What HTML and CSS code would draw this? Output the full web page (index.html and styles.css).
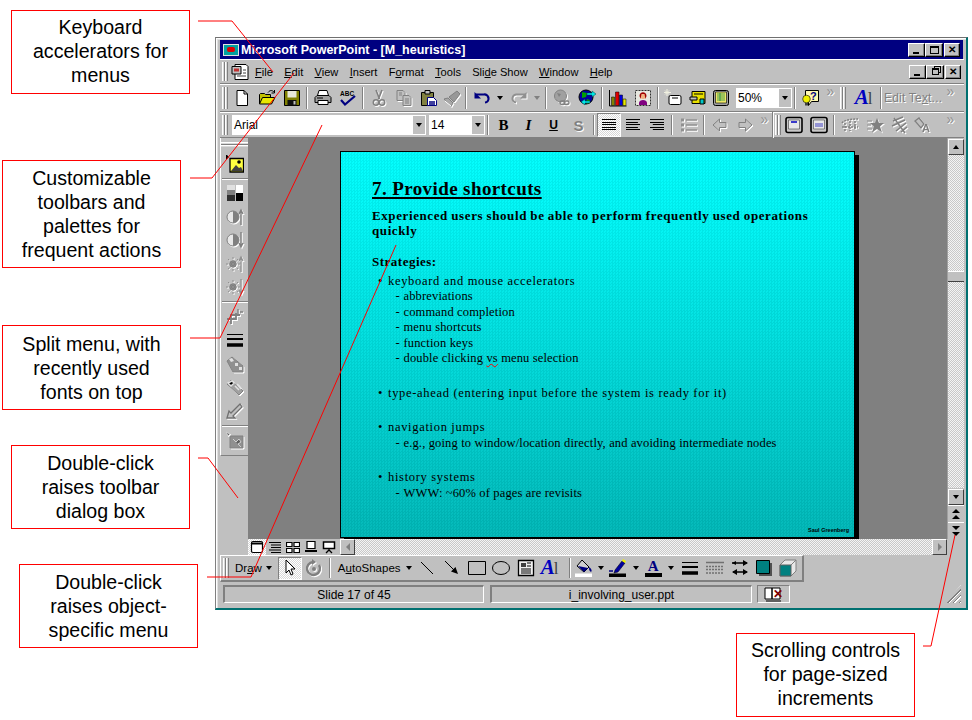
FILE: index.html
```html
<!DOCTYPE html>
<html lang="en">
<head>
    <meta charset="UTF-8">
    <title>Provide shortcuts</title>
    <link rel="stylesheet" href="styles.css">
</head>
<body>
<svg class="defs" width="0" height="0">
    <symbol id="new" viewBox="0 0 18 18"><path d="M4 1.500h7l3.500 3.500v11.500H4z" fill="#fff" stroke="#000"/><path d="M11 1.500V5h3.500" fill="none" stroke="#000"/></symbol>
    <symbol id="open" viewBox="0 0 18 18"><path d="M1.500 15V5.500l1-1h4l1 1h5v3" fill="#c0c000" stroke="#000"/><path d="M1.500 15l3-6.500H17L13.500 15z" fill="#e8e800" stroke="#000"/><path d="M10 3.500c2-2.500 4-2.500 6-.5M16.500 1v3h-3" fill="none" stroke="#000"/></symbol>
    <symbol id="save" viewBox="0 0 18 18"><path d="M1.500 1.500h15v15h-15z" fill="#808000" stroke="#000"/><path d="M4.500 2h9v6.500h-9z" fill="#e8e8d8"/><path d="M4.500 11h9v5.500h-9z" fill="#111"/><path d="M10.500 12h2v3.500h-2z" fill="#c0c0c0"/></symbol>
    <symbol id="print" viewBox="0 0 18 18"><path d="M5 1.500h8l1.500 5h-11z" fill="#fff" stroke="#000"/><path d="M1 8.500l2-2h12l2 2v5H1z" fill="#a0a0a0" stroke="#000"/><path d="M4 11.500h10v4H4z" fill="#fff" stroke="#000"/><path d="M3 9h6" stroke="#000"/></symbol>
    <symbol id="cut" viewBox="0 0 18 18"><path d="M6 1l3.500 9M12 1L8.500 10" stroke="#808080" stroke-width="1.600" fill="none"/><circle cx="6" cy="13.500" r="2.700" fill="none" stroke="#808080" stroke-width="1.500"/><circle cx="12" cy="13.500" r="2.700" fill="none" stroke="#808080" stroke-width="1.500"/></symbol>
    <symbol id="copy" viewBox="0 0 18 18"><path d="M2 1.500h6l2 2v8H2z" fill="#c0c0c0" stroke="#808080"/><path d="M8 6.500h6l2 2v8H8z" fill="#c0c0c0" stroke="#808080"/><path d="M10 10h4M10 12h4M10 14h4M4 4h3M4 6h3" stroke="#808080"/></symbol>
    <symbol id="paste" viewBox="0 0 18 18"><path d="M1.500 3.500h12v13h-12z" fill="#808040" stroke="#000"/><path d="M5 1.500h5v3.500H5z" fill="#c0c0c0" stroke="#000"/><path d="M7.500 8.500h6l3 3v5h-9z" fill="#fff" stroke="#000080"/><path d="M9 13h6M9 15h6" stroke="#000080" stroke-width="1.300"/></symbol>
    <symbol id="brush" viewBox="0 0 18 18"><path d="M1 10l4-1 5 5-2 3.500z" fill="#a8a8a8" stroke="#808080"/><path d="M6 8l8-6 3 3-6 8z" fill="#989898" stroke="#808080"/><path d="M2 12l6 5" stroke="#fff"/></symbol>
    <symbol id="undo" viewBox="0 0 18 18"><path d="M3 5.500h8a4 4 0 0 1 1 8" fill="none" stroke="#000080" stroke-width="2.200"/><path d="M1.500 3v6.500H8z" fill="#000080"/></symbol>
    <symbol id="redo" viewBox="0 0 18 18"><path d="M15 5.500H7a4 4 0 0 0-1 8" fill="none" stroke="#909090" stroke-width="2"/><path d="M16.500 3v6.500H10z" fill="#909090"/></symbol>
    <symbol id="globe-off" viewBox="0 0 18 18"><circle cx="7.500" cy="7" r="6" fill="#a0a0a0" stroke="#808080"/><path d="M4 4l4 1-2 3z" fill="#808080"/><rect x="7" y="12" width="5" height="3.500" rx="1.700" fill="none" stroke="#808080" stroke-width="1.400"/><rect x="11" y="12" width="5" height="3.500" rx="1.700" fill="none" stroke="#808080" stroke-width="1.400"/></symbol>
    <symbol id="globe" viewBox="0 0 18 18"><circle cx="8" cy="8" r="7" fill="#0000a0" stroke="#000"/><path d="M4 3l5 1-1 4-4 1zM9 10l3 1-2 4-2-1z" fill="#00a000"/><path d="M9 4h5V2l4 3-4 3V6H9zM12 12H7v-2l-4 3 4 3v-2h5z" fill="#00e8e8" stroke="#004040" stroke-width=".5"/></symbol>
    <symbol id="chart" viewBox="0 0 18 18"><path d="M.5 1v16h17" fill="none" stroke="#000"/><path d="M2.500 8h3v8.500h-3z" fill="#808000" stroke="#000" stroke-width=".5"/><path d="M6.500 3h3.500v13.500H6.500z" fill="#e00000" stroke="#000" stroke-width=".5"/><path d="M10.500 6h3v10.500h-3z" fill="#0000e0" stroke="#000" stroke-width=".5"/><path d="M14 10h3v6.500h-3z" fill="#e8e800" stroke="#000" stroke-width=".5"/></symbol>
    <symbol id="clip" viewBox="0 0 18 18"><path d="M1.500 1.500h15v15h-15z" fill="#e8e8e0" stroke="#303030" stroke-dasharray="2 1"/><path d="M5 14c0-4 8-4 8 0v2H5z" fill="#800080"/><circle cx="9" cy="7" r="3" fill="#f0b080"/><path d="M5.500 7c0-5 7-5 7 0l-1 3-1-5H7.500l-1 5z" fill="#a00000"/></symbol>
    <symbol id="slide-new" viewBox="0 0 18 18"><rect x="5" y="6.500" width="12" height="9" rx="1.500" fill="#fff" stroke="#000"/><path d="M8 9h6" stroke="#000"/><path d="M3 0v7M0 3.500h7M1 1.500l4 4M5 1.500l-4 4" stroke="#f0f0e0"/></symbol>
    <symbol id="slide-layout" viewBox="0 0 18 18"><path d="M3 2.500h13v12H3z" fill="#e8e000" stroke="#000"/><path d="M5 5h9" stroke="#000"/><path d="M1 8h7v3H1z" fill="#c0c0c0" stroke="#000"/><path d="M11 10h4v5h-4z" fill="#00c8c8" stroke="#000"/></symbol>
    <symbol id="slide-notes" viewBox="0 0 18 18"><rect x="1.500" y="1.500" width="15" height="15" rx="2" fill="#a0a0a0" stroke="#000"/><path d="M3.500 3h11v11h-11z" fill="#f0e868" stroke="#000" stroke-width=".6"/><path d="M5 5h8M5 7h8M5 9h8M5 11h8M8 4v8" stroke="#008040" stroke-width=".7"/></symbol>
    <symbol id="bullets" viewBox="0 0 18 18"><path d="M6 4h11M6 9h11M6 14h11" stroke="#909090" stroke-width="1.500"/><path d="M1 2.500h3v3H1zM1 7.500h3v3H1zM1 12.500h3v3H1z" fill="#909090"/></symbol>
    <symbol id="promote" viewBox="0 0 18 18"><path d="M2 9l6.500-6v3.500H15v5H8.500V15z" fill="#c0c0c0" stroke="#808080"/></symbol>
    <symbol id="demote" viewBox="0 0 18 18"><path d="M16 9L9.500 3v3.500H3v5h6.500V15z" fill="#c0c0c0" stroke="#808080"/></symbol>
    <symbol id="frame-a" viewBox="0 0 18 18"><rect x="1" y="1.500" width="16" height="15" rx="2" fill="#c8c8c8" stroke="#000" stroke-width="1.600"/><path d="M3.500 4h11v9h-11z" fill="#e8e8e8" stroke="#404040" stroke-width=".6"/><path d="M6 6h6" stroke="#0000c0" stroke-width="1.500"/></symbol>
    <symbol id="frame-b" viewBox="0 0 18 18"><rect x="1" y="1.500" width="16" height="15" rx="2" fill="#c8c8c8" stroke="#000" stroke-width="1.600"/><path d="M3.500 4h11v9h-11z" fill="#e8e8e8" stroke="#404040" stroke-width=".6"/><path d="M5 8h8M5 10h8" stroke="#4040c0"/></symbol>
    <symbol id="anim-a" viewBox="0 0 18 18"><path d="M1 7c3-4 13-4 16-4M1 11h16M4 7v8M9 5v10M14 5v8" fill="none" stroke="#808080" stroke-width="1.500" stroke-dasharray="2 1"/></symbol>
    <symbol id="anim-b" viewBox="0 0 18 18"><path d="M1 5h5M1 9h4M1 13h5" stroke="#a0a0a0" stroke-width="1.500"/><path d="M11 2l2 5h5l-4 3.500 2 6-5-3.500-5 3.500 2-6-4-3.500h5z" fill="#808080"/></symbol>
    <symbol id="anim-c" viewBox="0 0 18 18"><path d="M3 5l10-4M2 10L15 4M6 15L16 7M11 16l6-5M4 2l11 15" stroke="#808080" stroke-width="1.500" fill="none"/></symbol>
    <symbol id="insert-pic" viewBox="0 0 18 18"><path d="M4 3.500h13.500v13.500H4z" fill="#ffff40" stroke="#000" stroke-width="1.300"/><circle cx="13" cy="7" r="1.800" fill="#000"/><path d="M5 16l5-6 3 3 2-1 2 4z" fill="#404040"/><path d="M0 0l3 3-3 3z" fill="#000" transform="translate(0 -1)"/></symbol>
    <symbol id="colour-mode" viewBox="0 0 18 18"><path d="M1 1h8v16H1z" fill="#808080"/><path d="M1 1h8v5H1z" fill="#e0e0e0"/><path d="M1 11h8v6H1z" fill="#303030"/><path d="M10 1h7v8h-7z" fill="#fff"/><path d="M10 9h7v8h-7z" fill="#000"/></symbol>
    <symbol id="contrast-up" viewBox="0 0 18 18"><circle cx="7" cy="9" r="6" fill="#e8e8e8" stroke="#808080"/><path d="M7 3a6 6 0 0 1 0 12z" fill="#808080"/><path d="M15 17V3M13 6l2-4 2 4" fill="none" stroke="#808080" stroke-width="1.400"/></symbol>
    <symbol id="contrast-down" viewBox="0 0 18 18"><circle cx="7" cy="9" r="6" fill="#e8e8e8" stroke="#808080"/><path d="M7 3a6 6 0 0 1 0 12z" fill="#808080"/><path d="M15 1v14M13 12l2 4 2-4" fill="none" stroke="#808080" stroke-width="1.400"/></symbol>
    <symbol id="bright-up" viewBox="0 0 18 18"><circle cx="7" cy="9" r="3.500" fill="#808080"/><path d="M7 2v14M0 9h14M2 4l10 10M12 4L2 14" stroke="#909090" stroke-dasharray="2 1"/><path d="M15 17V3M13 6l2-4 2 4" fill="none" stroke="#909090" stroke-width="1.300"/></symbol>
    <symbol id="bright-down" viewBox="0 0 18 18"><circle cx="7" cy="9" r="3.500" fill="#808080"/><path d="M7 2v14M0 9h14M2 4l10 10M12 4L2 14" stroke="#909090" stroke-dasharray="2 1"/><path d="M15 1v14M13 12l2 4 2-4" fill="none" stroke="#909090" stroke-width="1.300"/></symbol>
    <symbol id="crop" viewBox="0 0 18 18"><path d="M1 11h9V5M5 16v-9h9" fill="none" stroke="#808080" stroke-width="1.800"/><path d="M12 1v5M14 4h3" stroke="#808080" stroke-width="1.400"/></symbol>
    <symbol id="line-style" viewBox="0 0 18 18"><path d="M1 3.500h16" stroke="#000"/><path d="M1 8h16" stroke="#000" stroke-width="2"/><path d="M1 14h16" stroke="#000" stroke-width="3.500"/></symbol>
    <symbol id="recolour" viewBox="0 0 18 18"><path d="M1 6l5-4 11 9v6H7z" fill="#909090" stroke="#808080"/><path d="M3 4l3-1 2 3-3 1zM9 8h3v3H9zM13 12h3v3h-3z" fill="#e0e0e0"/></symbol>
    <symbol id="trans" viewBox="0 0 18 18"><path d="M1 6l4-4 12 11-4 4z" fill="#a0a0a0" stroke="#808080"/><path d="M2 5l4-2 2 2-3 3zM9 8l4 4M11 6l4 5" stroke="#e0e0e0" stroke-width="1.500"/></symbol>
    <symbol id="pick" viewBox="0 0 18 18"><path d="M1 16l2-7 2 2 9-9 2 3-9 9 2 2z" fill="#c0c0c0" stroke="#707070" stroke-width="1.300"/></symbol>
    <symbol id="reset-pic" viewBox="0 0 18 18"><path d="M4 5h13v12H4z" fill="#909090" stroke="#808080"/><path d="M7 8l3 3 3-3 2 3-3 2 3 3M0 1l4 2-2 2z" stroke="#d0d0d0" fill="#606060"/></symbol>
    <symbol id="pointer" viewBox="0 0 18 18"><path d="M5 1v13l3-3 2 5 2-1-2-5h4z" fill="#fff" stroke="#000"/></symbol>
    <symbol id="rotate" viewBox="0 0 18 18"><path d="M14 6a6.500 6.500 0 1 1-6-3" fill="none" stroke="#808080" stroke-width="2.400"/><path d="M7 0l4 3-4 3z" fill="#808080"/><circle cx="9" cy="10" r="2" fill="#808080"/></symbol>
    <symbol id="line" viewBox="0 0 18 18"><path d="M3 3l12 12" stroke="#000"/></symbol>
    <symbol id="arrow" viewBox="0 0 18 18"><path d="M2 2l10 10" stroke="#000"/><path d="M15 15l-7-2.500 4.500-4.500z" fill="#000"/></symbol>
    <symbol id="rect" viewBox="0 0 18 18"><path d="M.5 2.500h17v13H.5z" fill="none" stroke="#000"/></symbol>
    <symbol id="oval" viewBox="0 0 18 18"><ellipse cx="9" cy="9" rx="8.500" ry="6.500" fill="none" stroke="#000"/></symbol>
    <symbol id="textbox" viewBox="0 0 18 18"><path d="M1.500 1.500h15v15h-15z" fill="#f0f0f0" stroke="#000" stroke-width="1.300"/><path d="M4 4h5v4H4z" fill="#404040"/><path d="M10 4h4M10 7h4M4 10h10M4 12h10M4 14h10" stroke="#000"/></symbol>
    <symbol id="fill" viewBox="0 0 18 18"><path d="M7 1l7 7-5 5-7-6z" fill="#d0d0d0" stroke="#000"/><path d="M3 7l6 6 4-4z" fill="#000080"/><path d="M14 8c3 2 3 4 2 5-2-1-2-3-2-5z" fill="#000080"/><path d="M0 14.500h17V18H0z" fill="#fff"/></symbol>
    <symbol id="pen" viewBox="0 0 18 18"><path d="M6 11l7-9 3 2-7 9-4 1z" fill="#0000a0" stroke="#000" stroke-width=".5"/><path d="M13 2l1-2 3 2-1 2z" fill="#f0f000"/><path d="M0 12h4" stroke="#000080" stroke-width="1.500"/><path d="M0 14.500h17V18H0z" fill="#000"/></symbol>
    <symbol id="shadow" viewBox="0 0 18 18"><path d="M4 4h13v13H4z" fill="#505050"/><path d="M1.500 1.500h13v13h-13z" fill="#008080" stroke="#000"/></symbol>
    <symbol id="cube" viewBox="0 0 18 18"><path d="M1 6l5-5h11v11l-5 5H1z" fill="#e8e8e8" stroke="#808080"/><path d="M1 6h11v11H1z" fill="#008080" stroke="#606060"/><path d="M12 6l5-5" stroke="#808080"/></symbol>
    <symbol id="dashes" viewBox="0 0 18 18"><path d="M0 3.500h18" stroke="#707070" stroke-width="1.500"/><path d="M0 7.500h18M0 10.500h18M0 14h18" stroke="#707070" stroke-width="1.300" stroke-dasharray="2 1"/></symbol>
    <symbol id="arrows" viewBox="0 0 18 18"><path d="M1 4h15M2 13h14" stroke="#000" stroke-width="1.500"/><path d="M17 4l-5-3v6zM1 13l5-3v6zM17 13l-5-3v6z" fill="#000"/><path d="M1 4l4-2v4z" fill="#000"/></symbol>
    <symbol id="doc-menu" viewBox="0 0 18 18"><path d="M4 1.500h11l2 2v13H4z" fill="#fff" stroke="#000"/><path d="M1 3.500h9V11H1z" fill="#c0c0c0" stroke="#000"/><path d="M3 5.500h5v3H3z" fill="#c03030"/><path d="M12 7h3M12 10h3M6 13h9" stroke="#404040"/></symbol>
    <symbol id="book" viewBox="0 0 18 18"><path d="M1 3h7v11H1zM8 3h8v11H8z" fill="#fff" stroke="#000"/><path d="M2 16h15" stroke="#000"/></symbol>
    <symbol id="vw-slide" viewBox="0 0 14 14"><rect x="1.500" y="1.500" width="11" height="11" rx="1.500" fill="#fff" stroke="#000" stroke-width="1.200"/><path d="M1.500 3.500h11" stroke="#000" stroke-width="2"/></symbol>
    <symbol id="vw-outline" viewBox="0 0 14 14"><path d="M1 2.500h12M3 5h10M3 7.500h10M1 10h12M3 12.500h10" stroke="#000" stroke-width="1.200"/></symbol>
    <symbol id="vw-sorter" viewBox="0 0 14 14"><path d="M.5 2.500h5.500v4H.5zM8 2.500h5.500v4H8zM.5 8.500h5.500v4H.5zM8 8.500h5.500v4H8z" fill="#fff" stroke="#000" stroke-width="1.200"/></symbol>
    <symbol id="vw-notes" viewBox="0 0 14 14"><path d="M3 1.500h8v7H3z" fill="#fff" stroke="#000" stroke-width="1.200"/><path d="M1 11h12" stroke="#000" stroke-width="2"/></symbol>
    <symbol id="vw-show" viewBox="0 0 14 14"><path d="M1.500 2h11v6.500h-11z" fill="#fff" stroke="#000" stroke-width="1.500"/><path d="M7 8.500v2M4 13l3-3 3 3" fill="none" stroke="#000" stroke-width="1.300"/></symbol>
</svg>

<div class="note note-keys">Keyboard<br>accelerators for<br>menus</div>
<div class="note note-bars">Customizable<br>toolbars and<br>palettes for<br>frequent actions</div>
<div class="note note-split">Split menu, with<br>recently used<br>fonts on top</div>
<div class="note note-dialog">Double-click<br>raises toolbar<br>dialog box</div>
<div class="note note-object">Double-click<br>raises object-<br>specific menu</div>
<div class="note note-scroll">Scrolling controls<br>for page-sized<br>increments</div>

<div class="window">
    <div class="title">
        <span class="app-icon"><i></i></span>
        <span class="title-text">Microsoft PowerPoint - [M_heuristics]</span>
        <span class="caps">
            <span class="cap"><i class="g-min"></i></span><span class="cap cap-wide"><i class="g-max"></i></span><span class="cap cap-gap">&#10005;</span>
        </span>
    </div>

    <div class="bar menu">
        <span class="grip"></span>
        <svg class="ic"><use href="#doc-menu"/></svg>
        <nav class="menu-items">
            <a><u>F</u>ile</a><a><u>E</u>dit</a><a><u>V</u>iew</a><a><u>I</u>nsert</a><a>F<u>o</u>rmat</a><a><u>T</u>ools</a><a>Sli<u>d</u>e Show</a><a><u>W</u>indow</a><a><u>H</u>elp</a>
        </nav>
        <span class="caps caps-doc">
            <span class="cap"><i class="g-min"></i></span><span class="cap cap-wide"><i class="g-restore"></i></span><span class="cap cap-gap">&#10005;</span>
        </span>
    </div>

    <div class="bar tools">
        <span class="grip"></span>
        <span class="btn"><svg class="ic"><use href="#new"/></svg></span>
        <span class="btn"><svg class="ic"><use href="#open"/></svg></span>
        <span class="btn"><svg class="ic"><use href="#save"/></svg></span>
        <span class="sep"></span>
        <span class="btn"><svg class="ic"><use href="#print"/></svg></span>
        <span class="btn"><svg class="ic" viewBox="0 0 18 18"><text x="1" y="7" class="svg-abc">ABC</text><path d="M2 11l4 4.500L16 7" fill="none" stroke="#000080" stroke-width="2.200"/></svg></span>
        <span class="sep"></span>
        <span class="btn off"><svg class="ic"><use href="#cut"/></svg></span>
        <span class="btn off"><svg class="ic"><use href="#copy"/></svg></span>
        <span class="btn"><svg class="ic"><use href="#paste"/></svg></span>
        <span class="btn btn-22 off"><svg class="ic"><use href="#brush"/></svg></span>
        <span class="sep"></span>
        <span class="btn"><svg class="ic"><use href="#undo"/></svg></span>
        <span class="drop"><i class="tri"></i></span>
        <span class="btn off"><svg class="ic"><use href="#redo"/></svg></span>
        <span class="drop"><i class="tri tri-off"></i></span>
        <span class="sep"></span>
        <span class="btn off"><svg class="ic"><use href="#globe-off"/></svg></span>
        <span class="btn"><svg class="ic"><use href="#globe"/></svg></span>
        <span class="sep"></span>
        <span class="btn"><svg class="ic"><use href="#chart"/></svg></span>
        <span class="btn"><svg class="ic"><use href="#clip"/></svg></span>
        <span class="sep"></span>
        <span class="btn btn-23"><svg class="ic"><use href="#slide-new"/></svg></span>
        <span class="btn btn-23 btn-push"><svg class="ic"><use href="#slide-layout"/></svg></span>
        <span class="btn btn-23"><svg class="ic"><use href="#slide-notes"/></svg></span>
        <span class="combo combo-zoom"><span class="combo-val">50%</span><span class="combo-btn"><i class="tri"></i></span></span>
        <span class="sep"></span>
        <span class="btn"><svg class="ic" viewBox="0 0 18 18"><path d="M3.500 1.500h13v11h-7l-3 4v-4h-3z" fill="#fff8b0" stroke="#000"/><text x="8" y="11" class="svg-help">?</text><circle cx="4.500" cy="10" r="3.800" fill="#f0f000" stroke="#000" stroke-width=".6"/><path d="M3 14h3v2.500H3z" fill="#404040"/></svg></span>
        <span class="more">&raquo;</span>
        <span class="grip grip-end"></span>
        <span class="btn"><span class="wordart">A<b>l</b></span></span>
        <span class="sep sep-tight"></span>
        <span class="edit-text">Edit Te<u>x</u>t...</span>
        <span class="more more-end">&raquo;</span>
    </div>

    <div class="bar tools tools-fmt">
        <span class="grip"></span>
        <span class="combo combo-font"><span class="combo-val">Arial</span><span class="combo-btn"><i class="tri"></i></span></span>
        <span class="combo combo-size"><span class="combo-val">14</span><span class="combo-btn"><i class="tri"></i></span></span>
        <span class="sep"></span>
        <span class="btn fmt fmt-b">B</span>
        <span class="btn fmt fmt-i">I</span>
        <span class="btn fmt fmt-u">U</span>
        <span class="btn fmt fmt-s">S</span>
        <span class="sep"></span>
        <span class="btn btn-24 pressed"><i class="align"></i></span>
        <span class="btn btn-24"><i class="align align-c"></i></span>
        <span class="btn btn-24"><i class="align align-r"></i></span>
        <span class="sep"></span>
        <span class="btn btn-24 btn-push off"><svg class="ic"><use href="#bullets"/></svg></span>
        <span class="sep"></span>
        <span class="btn off"><svg class="ic"><use href="#promote"/></svg></span>
        <span class="btn off"><svg class="ic"><use href="#demote"/></svg></span>
        <span class="more">&raquo;</span>
        <span class="split"></span>
        <span class="grip grip-end"></span>
        <span class="btn"><svg class="ic"><use href="#frame-a"/></svg></span>
        <span class="btn"><svg class="ic"><use href="#frame-b"/></svg></span>
        <span class="sep"></span>
        <span class="btn off"><svg class="ic"><use href="#anim-a"/></svg></span>
        <span class="btn off"><svg class="ic"><use href="#anim-b"/></svg></span>
        <span class="btn btn-23 off"><svg class="ic"><use href="#anim-c"/></svg></span>
        <span class="btn off"><svg class="ic" viewBox="0 0 18 18"><path d="M1 5l4-3 5 6-3 4z" fill="#c0c0c0" stroke="#808080" stroke-width="1.300"/><text x="8" y="16" class="svg-anim">A</text></svg></span>
        <span class="more more-end">&raquo;</span>
    </div>

    <div class="work">
        <aside class="dock">
            <span class="dock-grip"></span>
            <span class="dock-btn"><svg class="ic"><use href="#insert-pic"/></svg></span>
            <span class="dock-sep"></span>
            <span class="dock-btn"><svg class="ic"><use href="#colour-mode"/></svg></span>
            <span class="dock-btn off"><svg class="ic"><use href="#contrast-up"/></svg></span>
            <span class="dock-btn off"><svg class="ic"><use href="#contrast-down"/></svg></span>
            <span class="dock-btn off"><svg class="ic"><use href="#bright-up"/></svg></span>
            <span class="dock-btn off"><svg class="ic"><use href="#bright-down"/></svg></span>
            <span class="dock-sep"></span>
            <span class="dock-btn off"><svg class="ic"><use href="#crop"/></svg></span>
            <span class="dock-btn"><svg class="ic"><use href="#line-style"/></svg></span>
            <span class="dock-btn off"><svg class="ic"><use href="#recolour"/></svg></span>
            <span class="dock-btn off"><svg class="ic"><use href="#trans"/></svg></span>
            <span class="dock-btn off"><svg class="ic"><use href="#pick"/></svg></span>
            <span class="dock-sep"></span>
            <span class="dock-btn off"><svg class="ic"><use href="#reset-pic"/></svg></span>
        </aside>

        <div class="main">
            <div class="canvas-row">
                <div class="canvas">
                    <article class="slide">
                        <h1>7. Provide shortcuts</h1>
                        <p class="lead">Experienced users should be able to perform frequently used operations<br>quickly</p>
                        <h2>Strategies:</h2>
                        <ul class="points">
                            <li>keyboard and mouse accelerators
                                <ul class="subs">
                                    <li>abbreviations</li>
                                    <li>command completion</li>
                                    <li>menu shortcuts</li>
                                    <li>function keys</li>
                                    <li>double clicking <span class="typo">vs</span> menu selection</li>
                                </ul>
                            </li>
                            <li>type-ahead (entering input before the system is ready for it)</li>
                            <li>navigation jumps
                                <ul class="subs">
                                    <li>e.g., going to window/location directly, and avoiding intermediate nodes</li>
                                </ul>
                            </li>
                            <li>history systems
                                <ul class="subs">
                                    <li>WWW: ~60% of pages are revisits</li>
                                </ul>
                            </li>
                        </ul>
                        <footer class="credit">Saul Greenberg</footer>
                    </article>
                </div>
                <div class="vscroll">
                    <span class="sbtn sbtn-v"><i class="tri tri-up"></i></span>
                    <span class="track track-a"></span>
                    <span class="thumb"></span>
                    <span class="track"></span>
                    <span class="sbtn sbtn-v"><i class="tri"></i></span>
                    <span class="page-btn"><i class="tri tri-up"></i><i class="tri tri-up"></i></span>
                    <span class="page-btn"><i class="tri"></i><i class="tri"></i></span>
                </div>
            </div>
            <div class="hrow">
                <div class="views">
                    <span class="view view-on"><svg class="vw"><use href="#vw-slide"/></svg></span>
                    <span class="view"><svg class="vw"><use href="#vw-outline"/></svg></span>
                    <span class="view"><svg class="vw"><use href="#vw-sorter"/></svg></span>
                    <span class="view"><svg class="vw"><use href="#vw-notes"/></svg></span>
                    <span class="view"><svg class="vw"><use href="#vw-show"/></svg></span>
                </div>
                <span class="sbtn sbtn-h"><i class="tri tri-left"></i></span>
                <span class="track"></span>
                <span class="sbtn sbtn-h"><i class="tri tri-right"></i></span>
                <span class="corner"></span>
            </div>
        </div>
    </div>

    <div class="draw">
        <span class="grip"></span>
        <span class="draw-label">Dr<u>a</u>w</span><i class="tri"></i>
        <span class="btn btn-24 pressed draw-first"><svg class="ic"><use href="#pointer"/></svg></span>
        <span class="btn off"><svg class="ic"><use href="#rotate"/></svg></span>
        <span class="sep"></span>
        <span class="draw-label draw-shapes">A<u>u</u>toShapes</span><i class="tri"></i>
        <span class="btn draw-line"><svg class="ic"><use href="#line"/></svg></span>
        <span class="btn"><svg class="ic"><use href="#arrow"/></svg></span>
        <span class="btn btn-24"><svg class="ic"><use href="#rect"/></svg></span>
        <span class="btn"><svg class="ic"><use href="#oval"/></svg></span>
        <span class="btn btn-24"><svg class="ic"><use href="#textbox"/></svg></span>
        <span class="btn btn-24"><span class="wordart">A<b>l</b></span></span>
        <span class="sep sep-wide"></span>
        <span class="btn btn-22"><svg class="ic"><use href="#fill"/></svg></span>
        <span class="drop"><i class="tri"></i></span>
        <span class="btn btn-23"><svg class="ic"><use href="#pen"/></svg></span>
        <span class="drop"><i class="tri"></i></span>
        <span class="btn btn-23 font-color"><span class="font-a">A</span></span>
        <span class="drop"><i class="tri"></i></span>
        <span class="btn draw-lines"><svg class="ic"><use href="#line-style"/></svg></span>
        <span class="btn"><svg class="ic"><use href="#dashes"/></svg></span>
        <span class="btn"><svg class="ic"><use href="#arrows"/></svg></span>
        <span class="btn btn-23"><svg class="ic"><use href="#shadow"/></svg></span>
        <span class="btn"><svg class="ic"><use href="#cube"/></svg></span>
    </div>

    <div class="status">
        <span class="panel panel-slide">Slide 17 of 45</span>
        <span class="panel panel-file">i_involving_user.ppt</span>
        <span class="panel-spell"><svg class="ic"><use href="#book"/></svg><b>&#10005;</b></span>
        <span class="resize"></span>
    </div>
</div>

<svg class="leaders" width="972" height="720">
    <polyline points="198,21 232,21 273,72"/>
    <polyline points="190,178 212,178 294,73"/>
    <polyline points="190,338 220,338 322,125"/>
    <polyline points="198,458 208,458 238,498"/>
    <polyline points="207,577 251,577 396,245"/>
    <polyline points="923,646 931,646 955,535"/>
</svg>
</body>
</html>
```
FILE: styles.css
```css
html,body{margin:0;padding:0;background:#fff;}
body{position:relative;width:972px;height:720px;overflow:hidden;font-family:"Liberation Sans",Arial,sans-serif;}
.defs{position:absolute;}
.svg-abc{font:bold 6.5px "Liberation Sans",sans-serif;fill:#000;}
.svg-help{font:bold 11px "Liberation Sans",sans-serif;fill:#000080;}
.svg-anim{font:bold 11px "Liberation Sans",sans-serif;fill:#808080;}

/* callouts */
.note{position:absolute;box-sizing:border-box;width:179px;border:1px solid #f00;background:#fff;text-align:center;font-size:19.600px;line-height:24px;color:#000;display:flex;align-items:center;justify-content:center;}
.note-keys{left:11px;top:10px;height:84px;padding-bottom:2px;}
.note-bars{left:2px;top:160px;height:108px;}
.note-split{left:2px;top:325px;height:85px;}
.note-dialog{left:11px;top:445px;height:84px;}
.note-object{left:19px;top:564px;height:84px;}
.note-scroll{left:736px;top:633px;height:84px;padding-bottom:2px;}
.leaders{position:absolute;left:0;top:0;z-index:5;}
.leaders polyline{fill:none;stroke:#f00;stroke-width:1;}

/* window */
.window{position:absolute;left:215px;top:37px;width:753px;height:573px;box-sizing:border-box;background:#c0c0c0;padding:2px 2px 5px 4px;border-top:1px solid #707070;border-left:1px solid #808080;border-right:2px solid #007070;border-bottom:2px solid #007070;box-shadow:inset 1px 1px 0 #fff,inset 2px 2px 0 #e0e0e0;font-size:12px;color:#000;display:flex;flex-direction:column;}
.title{height:19px;flex:none;background:#000080;color:#fff;display:flex;align-items:center;padding:0 3px;margin-right:1px;}
.app-icon{width:16px;height:12px;background:#00a0a0;border:1px solid #e0e0e0;box-sizing:border-box;display:flex;align-items:center;justify-content:center;margin-right:2px;}
.app-icon i{width:8px;height:5px;background:#e00000;border-radius:2px;}
.title-text{font-weight:bold;font-size:12.500px;}
.caps{margin-left:auto;display:flex;}
.cap{width:17px;height:14px;box-sizing:border-box;background:#c0c0c0;border:1px solid;border-color:#fff #000 #000 #fff;box-shadow:inset -1px -1px 0 #808080;display:flex;align-items:center;justify-content:center;font-size:10px;font-weight:bold;color:#000;position:relative;}
.cap-wide{width:18px;}
.cap-gap{width:16px;margin-left:1px;}
.g-min{width:6px;height:2px;background:#000;align-self:flex-end;margin-bottom:2px;margin-right:2px;}
.g-max{width:9px;height:8px;box-sizing:border-box;border:1px solid #000;border-top-width:2px;}
.g-restore{width:7px;height:7px;box-sizing:border-box;border:1px solid #000;border-top-width:2px;background:#c0c0c0;box-shadow:2px -2px 0 -1px #c0c0c0,2px -2px 0 0 #000;}
.caps-doc{margin-right:3px;}

/* toolbars */
.bar{flex:none;display:flex;align-items:center;border-top:1px solid #fff;border-bottom:1px solid #808080;box-sizing:border-box;}
.menu{height:25px;}
.tools{height:28px;}
.tools-fmt{height:26px;}
.grip{flex:none;width:6px;align-self:stretch;margin:2px 1px 2px 2px;background:repeating-linear-gradient(90deg,#fff 0 1px,#d8d8d8 1px 2px,#808080 2px 3px);}
.grip-end{margin:2px 5px 2px 2px;}
.tools-fmt .grip-end{margin:2px 0;}
.ic{width:18px;height:18px;display:block;flex:none;}
.menu .ic{margin-left:2px;}
.menu-items{display:flex;gap:11.250px;margin-left:6px;font-size:11.100px;}
.btn{flex:none;width:25px;height:24px;display:flex;align-items:center;justify-content:center;box-sizing:border-box;}
.btn-22{width:22px;}
.btn-23{width:23px;}
.btn-24{width:24px;}
.btn-push{margin-left:2px;}
.off{filter:drop-shadow(1px 1px 0 #fff);}
.pressed{background:repeating-conic-gradient(#fff 0 25%,#d8d8d8 0 50%) 0 0/2px 2px;border:1px solid;border-color:#808080 #fff #fff #808080;}
.sep{flex:none;width:6px;align-self:stretch;margin:2px 0;background:linear-gradient(90deg,transparent 2px,#808080 2px 3px,#fff 3px 4px,transparent 4px);}
.sep-tight{width:5px;margin:2px 1px 2px 2px;}
.sep-wide{margin-left:5px;}
.tri{display:block;width:0;height:0;border-left:3.500px solid transparent;border-right:3.500px solid transparent;border-top:4px solid #000;flex:none;}
.tri-off{border-top-color:#808080;}
.tri-up{border-top:0;border-bottom:4px solid #000;}
.tri-left{border:0 solid transparent;border-top-width:4px;border-bottom-width:4px;border-right:4px solid #808080;}
.tri-right{border:0 solid transparent;border-top-width:4px;border-bottom-width:4px;border-left:4px solid #808080;}
.drop{flex:none;width:12px;display:flex;justify-content:center;}
.combo{flex:none;height:20px;display:flex;background:#fff;align-items:stretch;box-sizing:border-box;}
.combo-val{flex:1;display:flex;align-items:center;padding-left:2px;font-size:12px;}
.combo-btn{width:12px;background:#c0c0c0;margin:1px;display:flex;align-items:center;justify-content:center;}
.combo-zoom{width:56px;margin-left:4px;}
.combo-font{width:194px;margin-left:3px;}
.combo-size{width:56px;margin-left:3px;}
.more{flex:none;width:15px;align-self:flex-start;text-align:center;font-size:14px;line-height:12px;color:#909090;text-shadow:1px 1px 0 #fff;}
.more-end{margin-left:auto;margin-right:6px;}
.wordart{font:italic bold 21px "Liberation Serif",serif;color:#0000c0;line-height:20px;}
.wordart b{font-style:normal;font-weight:normal;font-size:17px;color:#404040;margin-left:-1px;}
.edit-text{flex:none;white-space:nowrap;color:#808080;text-shadow:1px 1px 0 #fff;font-size:12px;letter-spacing:.200px;}
.fmt{font:bold 15px "Liberation Serif",serif;}
.fmt-i{font-style:italic;}
.fmt-u{text-decoration:underline;font-family:"Liberation Sans",sans-serif;font-size:12px;}
.fmt-s{color:#808080;text-shadow:1px 1px 0 #fff;font-family:"Liberation Sans",sans-serif;}
.align{width:14px;height:12px;display:block;background:repeating-linear-gradient(#000 0 1px,transparent 1px 2.500px);}
.align-c{clip-path:polygon(0 0,100% 0,100% 20%,85% 20%,85% 40%,100% 40%,100% 60%,85% 60%,85% 80%,100% 80%,100% 100%,0 100%);}
.align-r{clip-path:polygon(0 0,100% 0,100% 100%,20% 100%,20% 80%,0 80%,0 60%,20% 60%,20% 40%,0 40%);}
.split{flex:none;width:2px;align-self:stretch;margin:-1px 1px -1px 0;background:linear-gradient(90deg,#808080 1px,#fff 1px);}

/* work area */
.work{flex:1;display:flex;min-height:0;}
.dock{flex:none;width:28px;height:318px;box-sizing:border-box;display:flex;flex-direction:column;align-items:center;padding-top:4px;border-left:1px solid #fff;border-bottom:1px solid #808080;}
.dock-grip{flex:none;width:27px;height:5px;margin-bottom:5px;background:repeating-linear-gradient(#fff 0 1px,#d8d8d8 1px 2px,#808080 2px 3px);}
.dock-btn{flex:none;height:23.500px;display:flex;align-items:center;justify-content:center;}
.dock-sep{flex:none;width:26px;height:2px;margin:2px 0;background:linear-gradient(#808080 1px,#fff 1px);}
.main{flex:1;display:flex;flex-direction:column;min-width:0;}
.canvas-row{flex:1;display:flex;min-height:0;}
.canvas{flex:1;background:#808080;padding:13px 0 0 92px;overflow:hidden;}
.vscroll{flex:none;width:17px;display:flex;flex-direction:column;border-left:1px solid #a0a0a0;box-sizing:border-box;}
.track{flex:1;background:repeating-conic-gradient(#c8c8c8 0 25%,#f4f4f4 0 50%) 0 0/2px 2px;}
.track-a{flex:none;height:116px;}
.thumb{flex:none;height:9px;background:#c0c0c0;border-top:1px solid #fff;border-bottom:1px solid #404040;}
.sbtn{flex:none;display:flex;align-items:center;justify-content:center;background:#c0c0c0;box-sizing:border-box;border:1px solid;border-color:#fff #404040 #404040 #fff;}
.sbtn-v{height:16px;margin-top:1px;}
.sbtn-h{width:15px;height:16px;}
.page-btn{flex:none;height:17px;box-sizing:border-box;display:flex;flex-direction:column;align-items:center;justify-content:center;gap:2px;background:#c0c0c0;border-top:1px solid #fff;}
.page-btn .tri{border-left-width:4.500px;border-right-width:4.500px;}
.hrow{flex:none;height:16px;display:flex;}
.views{flex:none;width:92px;display:flex;box-sizing:border-box;background:#c0c0c0;}
.view{flex:none;width:18px;display:flex;align-items:center;justify-content:center;}
.view-on{background:repeating-conic-gradient(#fff 0 25%,#d8d8d8 0 50%) 0 0/2px 2px;}
.vw{width:14px;height:14px;display:block;}
.corner{flex:none;width:17px;}

/* slide */
.slide{box-sizing:border-box;width:515px;height:387px;border:1px solid #000;box-shadow:4px 4px 0 #000;padding:26px 5px 0 31px;display:flex;flex-direction:column;font-family:"Liberation Serif","Times New Roman",serif;color:#000;background:repeating-conic-gradient(rgba(0,0,0,.05) 0 25%,rgba(255,255,255,.02) 0 50%) 0 0/3px 3px,linear-gradient(#00ffff,#00f4f4 20%,#00b8b8);}
.slide h1{margin:0;font-size:19px;line-height:22px;font-weight:bold;letter-spacing:.400px;text-decoration:underline;text-decoration-thickness:2px;text-underline-offset:2px;}
.lead{margin:8px 0 0;font-size:13px;line-height:15px;font-weight:bold;letter-spacing:.600px;word-spacing:-.5px;}
.slide h2{margin:16px 0 0;font-size:13px;line-height:16px;font-weight:bold;letter-spacing:.500px;}
.points{margin:3.500px 0 0;padding:0 0 0 16px;list-style:none;font-size:12.500px;line-height:15.500px;letter-spacing:.680px;}
.points>li+li{margin-top:19px;}
.points>li::before{content:"\2022";display:inline-block;width:10px;margin-left:-10px;}
.subs{margin:0;padding:0 0 0 15.500px;list-style:none;letter-spacing:.150px;}
.subs li::before{content:"-";display:inline-block;width:8px;margin-left:-8px;}
.typo{text-decoration:underline wavy #f00 1px;}
.credit{margin-top:auto;margin-bottom:4px;text-align:right;font:bold 5.500px "Liberation Sans",sans-serif;}

/* draw toolbar */
.draw{flex:none;width:584px;height:27px;box-sizing:border-box;display:flex;align-items:center;border-top:1px solid #fff;border-left:1px solid #fff;border-right:2px solid #808080;border-bottom:2px solid #808080;}
.draw .btn{height:23px;}
.draw-label{margin:0 4px 0 5px;font-size:11.500px;}
.draw-first{margin-left:6px;}
.draw-shapes{margin-left:5px;margin-right:5px;}
.draw-line{margin-left:3px;}
.draw-lines{margin-left:1px;}
.font-color{flex-direction:column;}
.font-a{display:block;font:bold 15px "Liberation Serif",serif;color:#000080;line-height:13px;border-bottom:4px solid #000;width:17px;text-align:center;}

/* status */
.status{flex:none;height:18px;margin-top:3px;display:flex;align-items:stretch;gap:6px;padding-left:3px;}
.panel{box-sizing:border-box;border:1px solid;border-color:#808080 #fff #fff #808080;border-width:2px 1px 1px 2px;padding-top:1px;display:flex;align-items:center;justify-content:center;font-size:12px;}
.panel-slide{width:261px;}
.panel-file{width:262px;}
.panel-spell{width:33px;margin-left:-1px;display:flex;align-items:center;justify-content:center;box-sizing:border-box;border:1px solid;border-color:#808080 #fff #fff #808080;}
.panel-spell b{color:#800000;font-size:12px;margin-left:-9px;}
.resize{margin-left:auto;width:16px;margin-right:3px;background:repeating-linear-gradient(135deg,transparent 0 2px,#808080 2px 3px,#fff 3px 4px);clip-path:polygon(100% 0,100% 100%,0 100%);}
```
